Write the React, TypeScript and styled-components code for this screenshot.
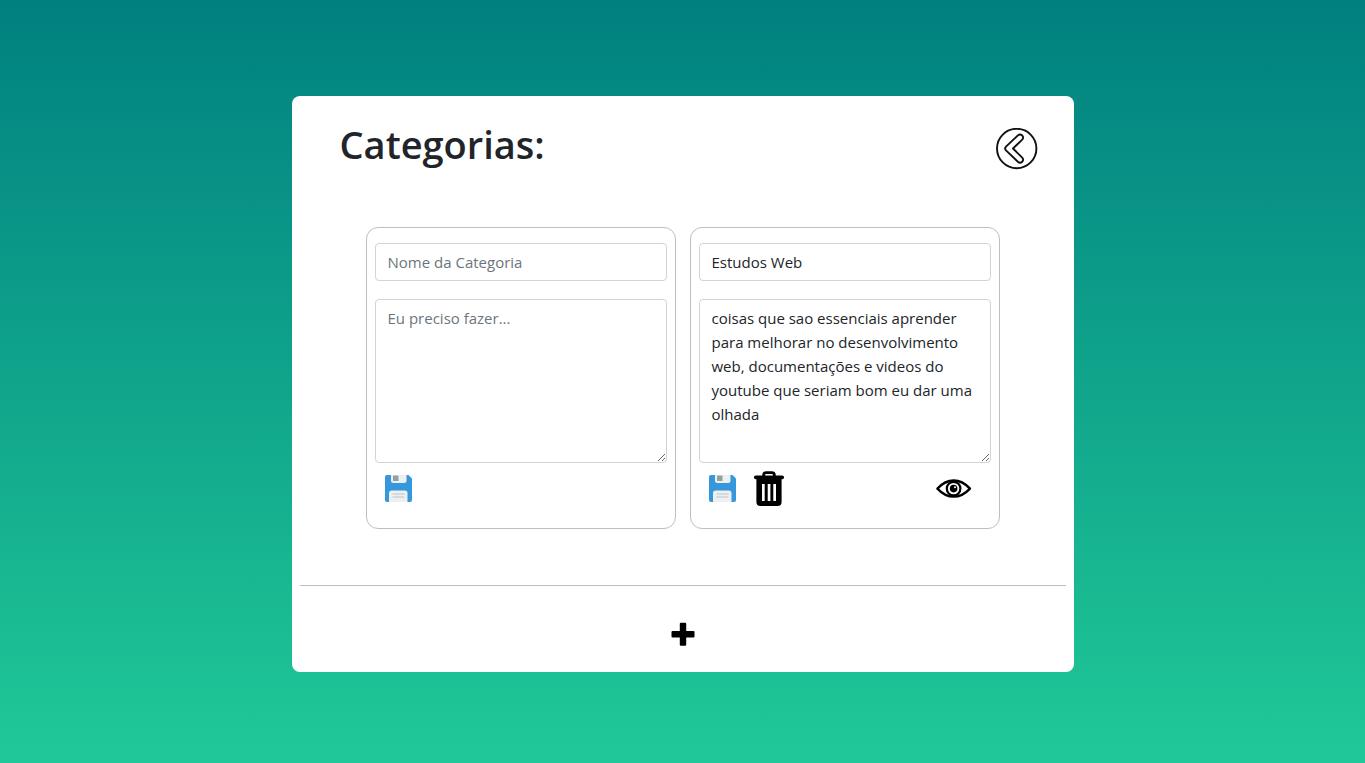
import React from "react";
import styled, { createGlobalStyle } from "styled-components";

const GlobalStyle = createGlobalStyle`
  *, *::before, *::after { box-sizing: border-box; }
  body {
    margin: 0;
    color: #212529;
    font-family: "Segoe UI", "Open Sans", "Noto Sans", sans-serif;
    font-size: 15px;
    line-height: 24px;
  }
`;

const Page = styled.div`
  display: flex;
  justify-content: center;
  align-items: flex-start;
  min-height: 100vh;
  padding: 96px 16px 80px;
  background: linear-gradient(#008080, #20c997);
`;

const Panel = styled.main`
  width: 100%;
  max-width: 782px;
  padding: 24px 8px 26px;
  border-radius: 8px;
  background: #fff;
`;

const Header = styled.header`
  display: flex;
  justify-content: space-between;
  align-items: flex-start;
  padding: 0 28px 0 40px;
`;

const Title = styled.h1`
  margin: 0;
  font-size: 38px;
  font-weight: 600;
  line-height: 48px;
`;

const IconButton = styled.button`
  display: flex;
  padding: 0;
  border: 0;
  background: transparent;
  color: #000;
  cursor: pointer;
`;

const BackButton = styled(IconButton)`
  margin-top: 8px;
`;

const CategoryList = styled.section`
  display: flex;
  flex-wrap: wrap;
  justify-content: center;
  gap: 14px;
  padding: 57px 0 56px;
`;

const CategoryCard = styled.form`
  display: flex;
  flex-direction: column;
  flex: 0 1 310px;
  padding: 15px 8px 21px;
  border: 1px solid #bebebe;
  border-radius: 12px;
`;

const fieldStyle = `
  display: block;
  width: 100%;
  margin: 0;
  padding: 6px 12px;
  border: 1px solid #ced4da;
  border-radius: 4px;
  background: #fff;
  color: #212529;
  font: inherit;
  &::placeholder { color: #6c757d; opacity: 1; }
`;

const NameInput = styled.input`
  ${fieldStyle}
  height: 38px;
`;

const NoteInput = styled.textarea`
  ${fieldStyle}
  height: 164px;
  margin-top: 18px;
  resize: vertical;
`;

const Actions = styled.div`
  display: flex;
  align-items: center;
  gap: 17px;
  height: 36px;
  margin-top: 8px;
  padding: 0 19px 0 9px;
`;

const ViewButton = styled(IconButton)`
  margin-left: auto;
`;

const Footer = styled.footer`
  display: flex;
  justify-content: center;
  padding-top: 36px;
  border-top: 1px solid #bebebe;
`;

const BackIcon = () => (
  <svg width="42" height="42" viewBox="0 0 42 42" fill="none" stroke="#111" strokeWidth="1.9" strokeLinejoin="round" aria-hidden="true">
    <circle cx="20.7" cy="20.5" r="19.7" />
    <path d="M21.9 7.4 L10 18.6 Q8.2 20.5 10 22.4 L21.9 33.8 C24.8 36.3 29 32.6 26.2 29.6 L17 20.5 L26.2 11.6 C29 8.6 24.8 4.9 21.9 7.4 Z" />
  </svg>
);

const SaveIcon = () => (
  <svg width="29" height="28" viewBox="0 1 29 28" aria-hidden="true">
    <path d="M3 1 H24.5 L28 4.5 V26 Q28 28 26 28 H3 Q1 28 1 26 V3 Q1 1 3 1Z" fill="#3697dc" />
    <path d="M7 1 H22.5 V6.5 Q22.5 9 20 9 H9.5 Q7 9 7 6.5Z" fill="#ecf0f1" />
    <rect x="9" y="1.5" width="5.5" height="5.5" rx="0.6" fill="#95a0a3" />
    <path d="M5 28 V19 Q5 16.5 7.5 16.5 H21 Q23.5 16.5 23.5 19 V28Z" fill="#ecf0f1" />
    <path d="M9 20 H20 M9 23 H20" stroke="#bdc3c7" strokeWidth="1.2" strokeLinecap="round" />
  </svg>
);

const TrashIcon = () => (
  <svg width="32" height="36" viewBox="0 0 32 36" aria-hidden="true">
    <path d="M9.6 5.5 V4.4 Q9.6 1.7 12.3 1.7 H17.7 Q20.4 1.7 20.4 4.4 V5.5" fill="none" stroke="#000" strokeWidth="2.8" />
    <rect x="0" y="4.4" width="30" height="3.8" rx="1.8" />
    <path fillRule="evenodd" d="M2.4 8 H27.6 V31 Q27.6 35 23.6 35 H6.4 Q2.4 35 2.4 31Z M8 13 V30 H10.7 V13Z M13.7 13 V30 H16.4 V13Z M19.3 13 V30 H22 V13Z" />
  </svg>
);

const EyeIcon = () => (
  <svg width="36" height="20" viewBox="0 0 36 20" fill="none" stroke="#000" aria-hidden="true">
    <path d="M1.4 9.6 C11.5 -1.2 23.9 -1.2 34 9.6 C23.9 20.4 11.5 20.4 1.4 9.6Z" strokeWidth="2.3" strokeLinejoin="round" />
    <circle cx="17.6" cy="9.6" r="6.8" strokeWidth="2.2" />
    <circle cx="17.6" cy="9.6" r="3.8" fill="#000" stroke="none" />
    <circle cx="19" cy="8.2" r="1" fill="#fff" stroke="none" />
  </svg>
);

const PlusIcon = () => (
  <svg width="24" height="24" viewBox="0 0 24 24" aria-hidden="true">
    <path d="M9.8 0.8 H14.2 Q15.2 0.8 15.2 1.8 V9 H22.5 Q23.5 9 23.5 10 V14.4 Q23.5 15.4 22.5 15.4 H15.2 V22.8 Q15.2 23.8 14.2 23.8 H9.8 Q8.8 23.8 8.8 22.8 V15.4 H1.5 Q0.5 15.4 0.5 14.4 V10 Q0.5 9 1.5 9 H8.8 V1.8 Q8.8 0.8 9.8 0.8Z" />
  </svg>
);

interface CategoryProps {
  name?: string;
  note?: string;
  saved?: boolean;
}

const Category = ({ name, note, saved }: CategoryProps) => (
  <CategoryCard onSubmit={(event: React.FormEvent) => event.preventDefault()}>
    <NameInput type="text" aria-label="Nome da Categoria" placeholder="Nome da Categoria" defaultValue={name} />
    <NoteInput aria-label="Eu preciso fazer..." placeholder="Eu preciso fazer..." defaultValue={note} spellCheck={false} />
    <Actions>
      <IconButton type="submit" aria-label="Salvar"><SaveIcon /></IconButton>
      {saved && (
        <>
          <IconButton type="button" aria-label="Excluir"><TrashIcon /></IconButton>
          <ViewButton type="button" aria-label="Ver"><EyeIcon /></ViewButton>
        </>
      )}
    </Actions>
  </CategoryCard>
);

export default function App() {
  return (
    <>
      <GlobalStyle />
      <Page>
        <Panel>
          <Header>
            <Title>Categorias:</Title>
            <BackButton type="button" aria-label="Voltar"><BackIcon /></BackButton>
          </Header>
          <CategoryList>
            <Category />
            <Category
              saved
              name="Estudos Web"
              note="coisas que sao essenciais aprender para melhorar no desenvolvimento web, documentações e videos do youtube que seriam bom eu dar uma olhada"
            />
          </CategoryList>
          <Footer>
            <IconButton type="button" aria-label="Adicionar categoria"><PlusIcon /></IconButton>
          </Footer>
        </Panel>
      </Page>
    </>
  );
}
